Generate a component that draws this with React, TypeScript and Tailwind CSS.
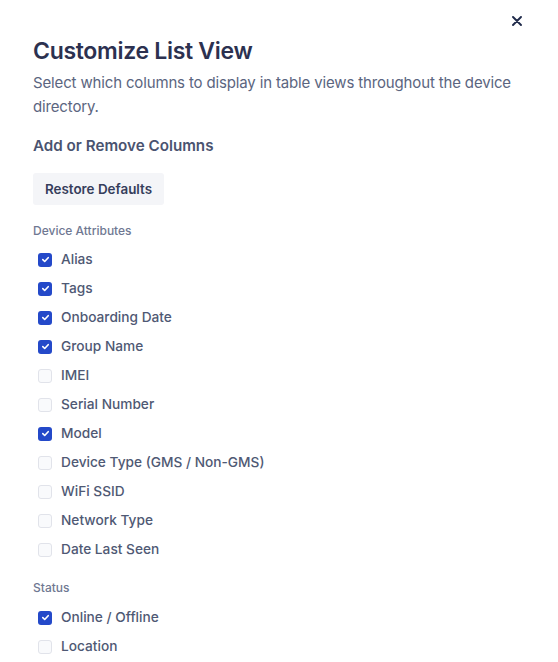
import React from "react";

const attrs: [string, boolean][] = [
  ["Alias", true],
  ["Tags", true],
  ["Onboarding Date", true],
  ["Group Name", true],
  ["IMEI", false],
  ["Serial Number", false],
  ["Model", true],
  ["Device Type (GMS / Non-GMS)", false],
  ["WiFi SSID", false],
  ["Network Type", false],
  ["Date Last Seen", false],
];

const status: [string, boolean][] = [
  ["Online / Offline", true],
  ["Location", false],
];

function Box({ checked }: { checked: boolean }) {
  return checked ? (
    <span className="flex h-[14px] w-[14px] items-center justify-center rounded-[3px] bg-[#2449c9]">
      <svg width="9" height="9" viewBox="0 0 10 10" fill="none">
        <path d="M2 5.2 L4.1 7.2 L8 3" stroke="white" strokeWidth="1.8" strokeLinecap="round" strokeLinejoin="round" />
      </svg>
    </span>
  ) : (
    <span className="h-[14px] w-[14px] rounded-[3px] border border-[#e1e3ea] bg-[#f9fafc]" />
  );
}

function Row({ label, checked }: { label: string; checked: boolean }) {
  return (
    <div className="flex h-[29px] items-center">
      <div className="ml-[5px] mr-[9px] flex w-[14px] items-center">
        <Box checked={checked} />
      </div>
      <span className="text-[13.7px] font-medium text-[#4f5974]">{label}</span>
    </div>
  );
}

export default function App() {
  return (
    <div
      className="relative min-h-[662px] w-[558px] bg-white pl-[33px] pr-[10px]"
      style={{ fontFamily: "Inter, 'Noto Sans', sans-serif" }}
    >
      <button className="absolute right-[34px] top-[14px] flex h-[14px] w-[14px] items-center justify-center">
        <svg width="10" height="10" viewBox="0 0 10 10">
          <path d="M1 1 L9 9 M9 1 L1 9" stroke="#1f2a4a" strokeWidth="1.9" strokeLinecap="round" />
        </svg>
      </button>
      <div className="pt-[35px]">
        <h1 className="text-[23px] font-semibold leading-[32px] tracking-[-0.3px] text-[#2c3150]">Customize List View</h1>
        <p className="mt-[4px] text-[15px] leading-[24px] tracking-[-0.15px] text-[#5b6580]">
          Select which columns to display in table views throughout the device directory.
        </p>
        <h2 className="mt-[15px] text-[15.2px] font-semibold leading-[24px] text-[#4a5370]">Add or Remove Columns</h2>
        <button className="mt-[15px] h-[32px] rounded-[3px] bg-[#f4f5f8] px-[12px] text-[13.4px] font-semibold text-[#363e5c]">
          Restore Defaults
        </button>
        <div className="mt-[18px] text-[12px] font-medium leading-[16px] text-[#6f7892]">Device Attributes</div>
        <div className="mt-[6px]">
          {attrs.map(([l, c]) => (
            <Row key={l} label={l} checked={c} />
          ))}
        </div>
        <div className="mt-[16px] text-[12px] font-medium leading-[16px] text-[#6f7892]">Status</div>
        <div className="mt-[7px]">
          {status.map(([l, c]) => (
            <Row key={l} label={l} checked={c} />
          ))}
        </div>
      </div>
    </div>
  );
}
